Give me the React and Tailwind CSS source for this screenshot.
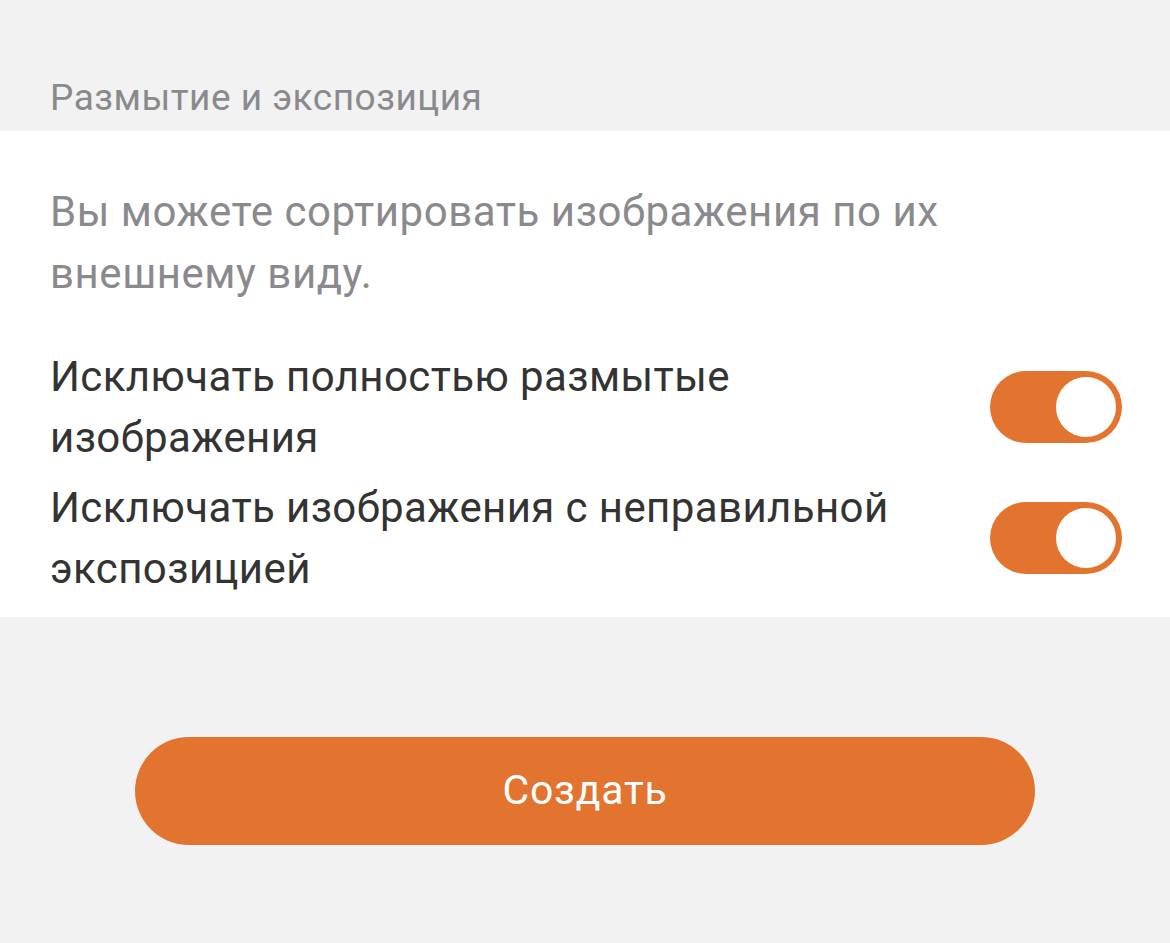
import React from 'react'

function Toggle() {
  return (
    <div className="w-[132px] h-[72px] shrink-0 rounded-full bg-[#e3742f] p-[6px] flex justify-end">
      <div className="w-[60px] h-[60px] rounded-full bg-white" />
    </div>
  )
}

export default function App() {
  const rows = [
    ['Исключать полностью размытые', 'изображения'],
    ['Исключать изображения с неправильной', 'экспозицией'],
  ]

  return (
    <div className="min-h-[943px] bg-[#f2f2f2] font-['Roboto',sans-serif]">
      <div className="h-[131px] flex items-end px-[50px] pb-[11px]">
        <h2 className="text-[37px] leading-[44px] tracking-[0.5px] text-[#8a8a8e]">Размытие и экспозиция</h2>
      </div>

      <div className="bg-white pt-[50px] pb-[18px]">
        <p className="px-[50px] text-[42px] leading-[62px] tracking-[0.55px] text-[#8a8a8e]">
          Вы можете сортировать изображения по их
          <br />
          внешнему виду.
        </p>

        <div className="mt-[41px] flex flex-col gap-[9px]">
          {rows.map((lines, index) => (
            <div key={index} className="flex items-center justify-between pl-[50px] pr-[48px]">
              <p className="text-[42px] leading-[61px] tracking-[0.4px] text-[#333333]">
                {lines[0]}
                <br />
                {lines[1]}
              </p>
              <Toggle />
            </div>
          ))}
        </div>
      </div>

      <div className="flex justify-center pt-[120px]">
        <button className="w-[900px] h-[108px] rounded-full bg-[#e3742f] text-white text-[41px] tracking-[0.8px]">
          Создать
        </button>
      </div>
    </div>
  )
}
